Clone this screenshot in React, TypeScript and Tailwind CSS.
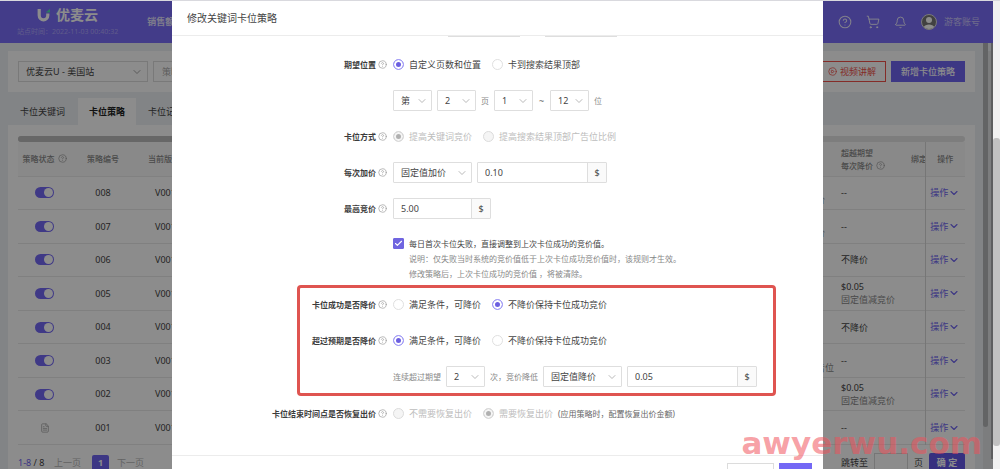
import React from "react";
import { Bell, Check, ChevronDown, CirclePlay, FileText, HelpCircle, ShoppingCart } from "lucide-react";

function Help() {
  return <HelpCircle className="size-[9px] shrink-0 text-[#999]" strokeWidth={1.8} aria-hidden="true" />;
}

function Select({ label, value, wide }: { label: string; value: string; wide?: boolean }) {
  return (
    <span className={wide ? "relative w-[79px]" : "relative w-[39px]"}>
      <select
        aria-label={label}
        defaultValue={value}
        className="h-[21px] w-full appearance-none rounded-[1px] border border-[#dedede] bg-white pl-[7px] text-[9px] text-[#444]"
      >
        <option>{value}</option>
      </select>
      <ChevronDown className="pointer-events-none absolute top-[5px] right-[4px] size-[12px] text-[#b0b0b0]" strokeWidth={1.8} />
    </span>
  );
}

function Money({ label, value, wide }: { label: string; value: string; wide?: boolean }) {
  return (
    <span className="flex h-[21px] rounded-[1px] border border-[#dedede]">
      <input
        aria-label={label}
        defaultValue={value}
        className={wide ? "w-[109px] bg-white px-[7px] text-[9px] text-[#444]" : "w-[77px] bg-white px-[7px] text-[9px] text-[#444]"}
      />
      <span className="flex w-[19px] items-center justify-center border-l border-[#dedede] bg-[#fafafa] text-[9px] text-[#444]">$</span>
    </span>
  );
}

function Radio({ name, text, checked, disabled }: { name: string; text: string; checked?: boolean; disabled?: boolean }) {
  return (
    <label className={disabled ? "mr-[6px] flex items-center gap-[5px] text-[#bdbdbd]" : "mr-[6px] flex items-center gap-[5px] text-[#444]"}>
      <input
        type="radio"
        name={name}
        defaultChecked={checked}
        disabled={disabled}
        className="size-[11px] shrink-0 appearance-none rounded-full border border-[#e0e0e0] bg-white checked:border-[#a29cf8] checked:bg-[#6c5fe0] checked:shadow-[inset_0_0_0_2px_#fff] disabled:border-[#dcdcdc] disabled:bg-[#f5f5f5] disabled:checked:bg-[#b0b0b0] disabled:checked:shadow-[inset_0_0_0_2px_#f5f5f5]"
      />
      {text}
    </label>
  );
}

function Field({ label, children }: { label?: string; children: React.ReactNode }) {
  return (
    <div role="group" aria-label={label} className="flex h-[21px] items-center gap-[6px] whitespace-nowrap text-[9px]">
      <span className="flex w-[215px] shrink-0 items-center justify-end gap-[2px] text-[8px] font-bold text-[#3c3c3c]">
        {label && (
          <>
            {label}
            <Help />
          </>
        )}
      </span>
      <div className="flex items-center gap-[5px]">{children}</div>
    </div>
  );
}

const rows = [
  { id: "008", mode: "提高关键词竞价", cut: "--" },
  { id: "007", mode: "提高关键词竞价", cut: "--" },
  { id: "006", cut: "不降价" },
  { id: "005", cut: "$0.05", sub: "固定值减竞价" },
  { id: "004", cut: "不降价" },
  { id: "003", mode: "搜索结果页广告位", cut: "--" },
  { id: "002", cut: "$0.05", sub: "固定值减竞价" },
  { id: "001", cut: "--", draft: true },
];

function Header() {
  return (
    <header className="flex h-[42px] items-center justify-between bg-[#7a6dfa] pr-[13px] pl-[17px] text-white">
      <div className="flex items-center gap-[29px]">
        <div className="flex flex-col items-center">
          <div className="flex items-center gap-[5px] text-[14px] leading-[20px] font-bold">
            <svg viewBox="0 0 14 14" className="size-[14px]" aria-hidden="true">
              <path d="M2.2 1v6.2c0 6.2 8.6 6.2 8.6 0V5.6" fill="none" stroke="#fff" strokeWidth="3.2" />
              <path d="M9.2 4L13 .8v3.8H9.2z" fill="#4ee0b0" />
            </svg>
            优麦云
          </div>
          <div className="text-[7px] leading-[14px] whitespace-nowrap text-white/40">站点时间：2022-11-03 00:40:32</div>
        </div>
        <a href="#sales" className="text-[9px] font-bold text-white/80">销售额</a>
      </div>
      <div className="flex items-center gap-[14px] text-white/85">
        <HelpCircle className="size-[14px]" strokeWidth={1.8} />
        <ShoppingCart className="size-[14px]" strokeWidth={1.7} />
        <Bell className="size-[13px]" strokeWidth={1.8} />
        <div className="flex items-center gap-[7px] text-[9px]">
          <svg viewBox="0 0 16 16" className="size-[16px]" aria-hidden="true">
            <circle cx="8" cy="8" r="7.5" fill="#777" stroke="#ddd" />
            <circle cx="8" cy="6" r="3" fill="#fff" />
            <path d="M2.8 13C4 9.5 12 9.5 13.2 13a7.5 7.5 0 0 1-10.4 0z" fill="#fff" />
          </svg>
          <span className="text-white/60">游客账号</span>
        </div>
      </div>
    </header>
  );
}

function StrategyPage() {
  return (
    <div className="flex flex-col">
      <Header />
      <div className="flex bg-[#edf0f4] pt-[8px] pl-[8px]">
        <main className="min-w-0 flex-1 text-[9px] text-[#444]">
          <div className="flex h-[41px] items-center justify-between bg-white px-[10px]">
            <div className="flex gap-[5px]">
              <span className="relative w-[130px]">
                <select aria-label="店铺" className="h-[21px] w-full appearance-none border border-[#dcdcdc] bg-white pl-[7px]">
                  <option>优麦云U - 美国站</option>
                </select>
                <ChevronDown className="pointer-events-none absolute top-[5px] right-[5px] size-[12px] text-[#999]" strokeWidth={1.8} />
              </span>
              <input aria-label="策略名称" placeholder="策略名称" className="h-[21px] w-[130px] border border-[#dcdcdc] px-[8px] placeholder:text-[#aaa]" />
            </div>
            <div className="flex gap-[5px]">
              <button className="flex h-[21px] items-center gap-[3px] border border-[#f0504a] px-[9px] text-[#f0504a]">
                <CirclePlay className="size-[9px]" />
                视频讲解
              </button>
              <button className="h-[21px] bg-[#7065f0] px-[10px] font-medium text-white">新增卡位策略</button>
            </div>
          </div>
          <nav className="mt-[6px] flex h-[27px] items-center">
            <button className="h-full w-[70px] pl-[12px] text-left">卡位关键词</button>
            <button className="h-full w-[58px] bg-white font-bold text-[#222]">卡位策略</button>
            <button className="h-full pl-[12px]">卡位记录</button>
          </nav>
          <section className="bg-white px-[10px] pt-[11px]">
            <div className="h-[6px] rounded-[3px] bg-[#e4e4e4]">
              <div className="h-full w-3/4 rounded-[3px] bg-[#bcbcbc]" />
            </div>
            <table className="h-[303px] w-full table-fixed border-collapse text-left whitespace-nowrap">
              <colgroup>
                <col className="w-[53px]" />
                <col className="w-[64px]" />
                <col className="w-[100px]" />
                <col />
                <col className="w-[69px]" />
                <col className="w-[80px]" />
                <col className="w-[14px]" />
                <col className="w-[40px]" />
              </colgroup>
              <thead className="bg-[#fafafa] text-[8px] text-[#888]">
                <tr className="h-[34px] border-b border-[#ececec]">
                  <th className="font-medium">
                    <span className="flex items-center justify-center gap-[3px]">策略状态 <Help /></span>
                  </th>
                  <th className="text-center font-medium">策略编号</th>
                  <th className="pl-[13px] font-medium">当前版本</th>
                  <th />
                  <th />
                  <th className="pl-[10px] leading-[13px] font-medium">
                    超越期望
                    <span className="flex items-center gap-[3px]">每次降价 <Help /></span>
                  </th>
                  <th className="overflow-hidden font-medium">绑定</th>
                  <th className="border-l border-[#d8d8d8] text-center font-medium">操作</th>
                </tr>
              </thead>
              <tbody>
                {rows.map((r) => (
                  <tr key={r.id} className="h-[33px] border-b border-[#eaeaea]">
                    <td>
                      <span className="flex justify-center">
                        {r.draft ? (
                          <FileText className="size-[10px] text-[#aaa]" />
                        ) : (
                          <input
                            type="checkbox"
                            role="switch"
                            defaultChecked
                            aria-label={"策略 " + r.id}
                            className="h-[11px] w-[19px] appearance-none rounded-full bg-[#7468f5] p-[1px] before:ml-auto before:block before:size-[9px] before:rounded-full before:bg-white"
                          />
                        )}
                      </span>
                    </td>
                    <td className="text-center">{r.id}</td>
                    <td className="pl-[20px]">V001</td>
                    <td />
                    <td className="pt-[13px] leading-[13px] text-[#888]">{r.mode}</td>
                    <td className="pl-[10px] leading-[13px]">
                      {r.cut}
                      {r.sub && <div className="text-[#888]">{r.sub}</div>}
                    </td>
                    <td />
                    <td className="border-l border-[#d8d8d8]">
                      <button className="flex w-full items-center justify-center text-[#7065f0]">
                        操作 <ChevronDown className="size-[12px]" strokeWidth={2.2} />
                      </button>
                    </td>
                  </tr>
                ))}
              </tbody>
            </table>
            <div className="flex items-center justify-between py-[8px]">
              <div className="flex items-center">
                <span className="w-[36px]"><span className="text-[#7065f0]">1-8</span> / 8</span>
                <button className="w-[38px] text-left text-[#b5b5b5]">上一页</button>
                <button className="h-[17px] w-[17px] rounded-[2px] bg-[#7065f0] font-bold text-white">1</button>
                <button className="ml-[8px] text-[#b5b5b5]">下一页</button>
              </div>
              <div className="flex items-center gap-[6px]">
                <label htmlFor="jump">跳转至</label>
                <input id="jump" className="h-[20px] w-[34px] border border-[#d8d8d8]" />
                <span>页</span>
                <button className="h-[20px] w-[36px] rounded-[2px] bg-[#6458e8] font-bold text-white">确 定</button>
              </div>
            </div>
          </section>
        </main>
        <div className="ml-[8px] flex w-[10px] justify-between bg-[#e2e4e6]">
          <div className="mt-[-8px] h-[384px] w-[5px] rounded-b-full bg-[#b4b7b9]" />
          <div className="mt-[-8px] h-[416px] w-[2px] bg-[#a9abad]" />
        </div>
      </div>
    </div>
  );
}

function StrategyDialog() {
  return (
    <div role="dialog" aria-label="修改关键词卡位策略" className="w-full max-w-[651px] bg-white">
      <h2 className="flex h-[35px] items-center border-b border-[#ececec] pl-[15px] text-[10px] text-[#444]">修改关键词卡位策略</h2>
      <form className="flex flex-col">
        <div className="flex gap-[25px] pl-[276px]">
          <span className="h-px w-[72px] bg-[#dedede]" />
          <span className="h-px w-[72px] bg-[#dedede]" />
        </div>
        <div className="flex flex-col gap-[15px] pt-[17px]">
          <Field label="期望位置">
            <Radio name="position" text="自定义页数和位置" checked />
            <Radio name="position" text="卡到搜索结果顶部" />
          </Field>
          <Field>
            <Select label="第" value="第" />
            <Select label="页数" value="2" />
            <span className="text-[8px] text-[#888]">页</span>
            <Select label="起始位" value="1" />
            <span className="w-[7px] text-center text-[#666]">~</span>
            <Select label="结束位" value="12" />
            <span className="text-[8px] text-[#888]">位</span>
          </Field>
          <Field label="卡位方式">
            <Radio name="mode" text="提高关键词竞价" checked disabled />
            <Radio name="mode" text="提高搜索结果顶部广告位比例" disabled />
          </Field>
          <Field label="每次加价">
            <Select label="加价方式" value="固定值加价" wide />
            <Money label="加价金额" value="0.10" wide />
          </Field>
          <Field label="最高竞价">
            <Money label="最高竞价" value="5.00" />
          </Field>
        </div>
        <div className="mt-[17px] ml-[221px] text-[8px] leading-[15px] whitespace-nowrap">
          <label className="flex items-center gap-[5px] text-[#444]">
            <span className="relative flex size-[11px]">
              <input type="checkbox" defaultChecked className="size-[11px] appearance-none rounded-[1px] border border-[#ccc] checked:border-[#7065e0] checked:bg-[#7065e0]" />
              <Check className="pointer-events-none absolute top-[1px] left-[1px] size-[9px] text-white" strokeWidth={3} />
            </span>
            每日首次卡位失败，直接调整到上次卡位成功的竞价值。
          </label>
          <p className="pl-[16px] text-[#888]">说明：仅失败当时系统的竞价值低于上次卡位成功竞价值时，该规则才生效。</p>
          <p className="pl-[16px] text-[#888]">修改策略后，上次卡位成功的竞价值 ，将被清除。</p>
        </div>
        <div className="relative mt-[13px] flex flex-col gap-[15px]">
          <div className="pointer-events-none absolute -inset-y-[9px] right-[47px] left-[125px] rounded-[4px] border-[3px] border-[#df5450]" />
          <Field label="卡位成功是否降价">
            <Radio name="success" text="满足条件，可降价" />
            <Radio name="success" text="不降价保持卡位成功竞价" checked />
          </Field>
          <Field label="超过预期是否降价">
            <Radio name="exceed" text="满足条件，可降价" checked />
            <Radio name="exceed" text="不降价保持卡位成功竞价" />
          </Field>
          <Field>
            <span className="text-[8px] text-[#888]">连续超过期望</span>
            <Select label="连续次数" value="2" />
            <span className="text-[8px] text-[#888]">次，竞价降低</span>
            <Select label="降价方式" value="固定值降价" wide />
            <Money label="降价金额" value="0.05" wide />
          </Field>
        </div>
        <div className="pt-[16px] pb-[31px]">
          <Field label="卡位结束时间点是否恢复出价">
            <Radio name="restore" text="不需要恢复出价" disabled />
            <Radio name="restore" text="需要恢复出价" checked disabled />
            <span className="ml-[-6px] text-[8px] text-[#666]">(应用策略时，配置恢复出价金额)</span>
          </Field>
        </div>
        <div className="flex justify-end gap-[5px] border-t border-[#ececec] py-[7px] pr-[11px] text-[9px]">
          <button type="button" aria-label="取消" className="h-[21px] w-[47px] border border-[#dcdcdc]" />
          <button type="button" aria-label="保存" className="h-[21px] w-[33px] bg-[#7468f5]" />
        </div>
      </form>
    </div>
  );
}

export default function App() {
  return (
    <div className="relative flex h-screen overflow-hidden border-t border-[#d9d9de] bg-[#edf0f4] font-['Noto_Sans','Noto_Sans_CJK_SC',sans-serif]">
      <div className="relative h-full min-w-0 flex-1 overflow-hidden">
        <StrategyPage />
        <div className="absolute inset-0 flex items-start justify-center bg-black/45 pl-[2px]">
          <StrategyDialog />
        </div>
      </div>
      <div className="flex w-[7px] shrink-0 flex-col bg-[#f1f1f1] pt-[137px]">
        <div className="h-[308px] rounded-[3px] bg-[#c1c1c1]" />
      </div>
      <div className="pointer-events-none absolute right-[18px] bottom-[6px] font-['DejaVu_Sans',sans-serif] text-[31px] leading-[40px] font-bold text-[#f0505a]/55">
        awyerwu.com
      </div>
    </div>
  );
}
